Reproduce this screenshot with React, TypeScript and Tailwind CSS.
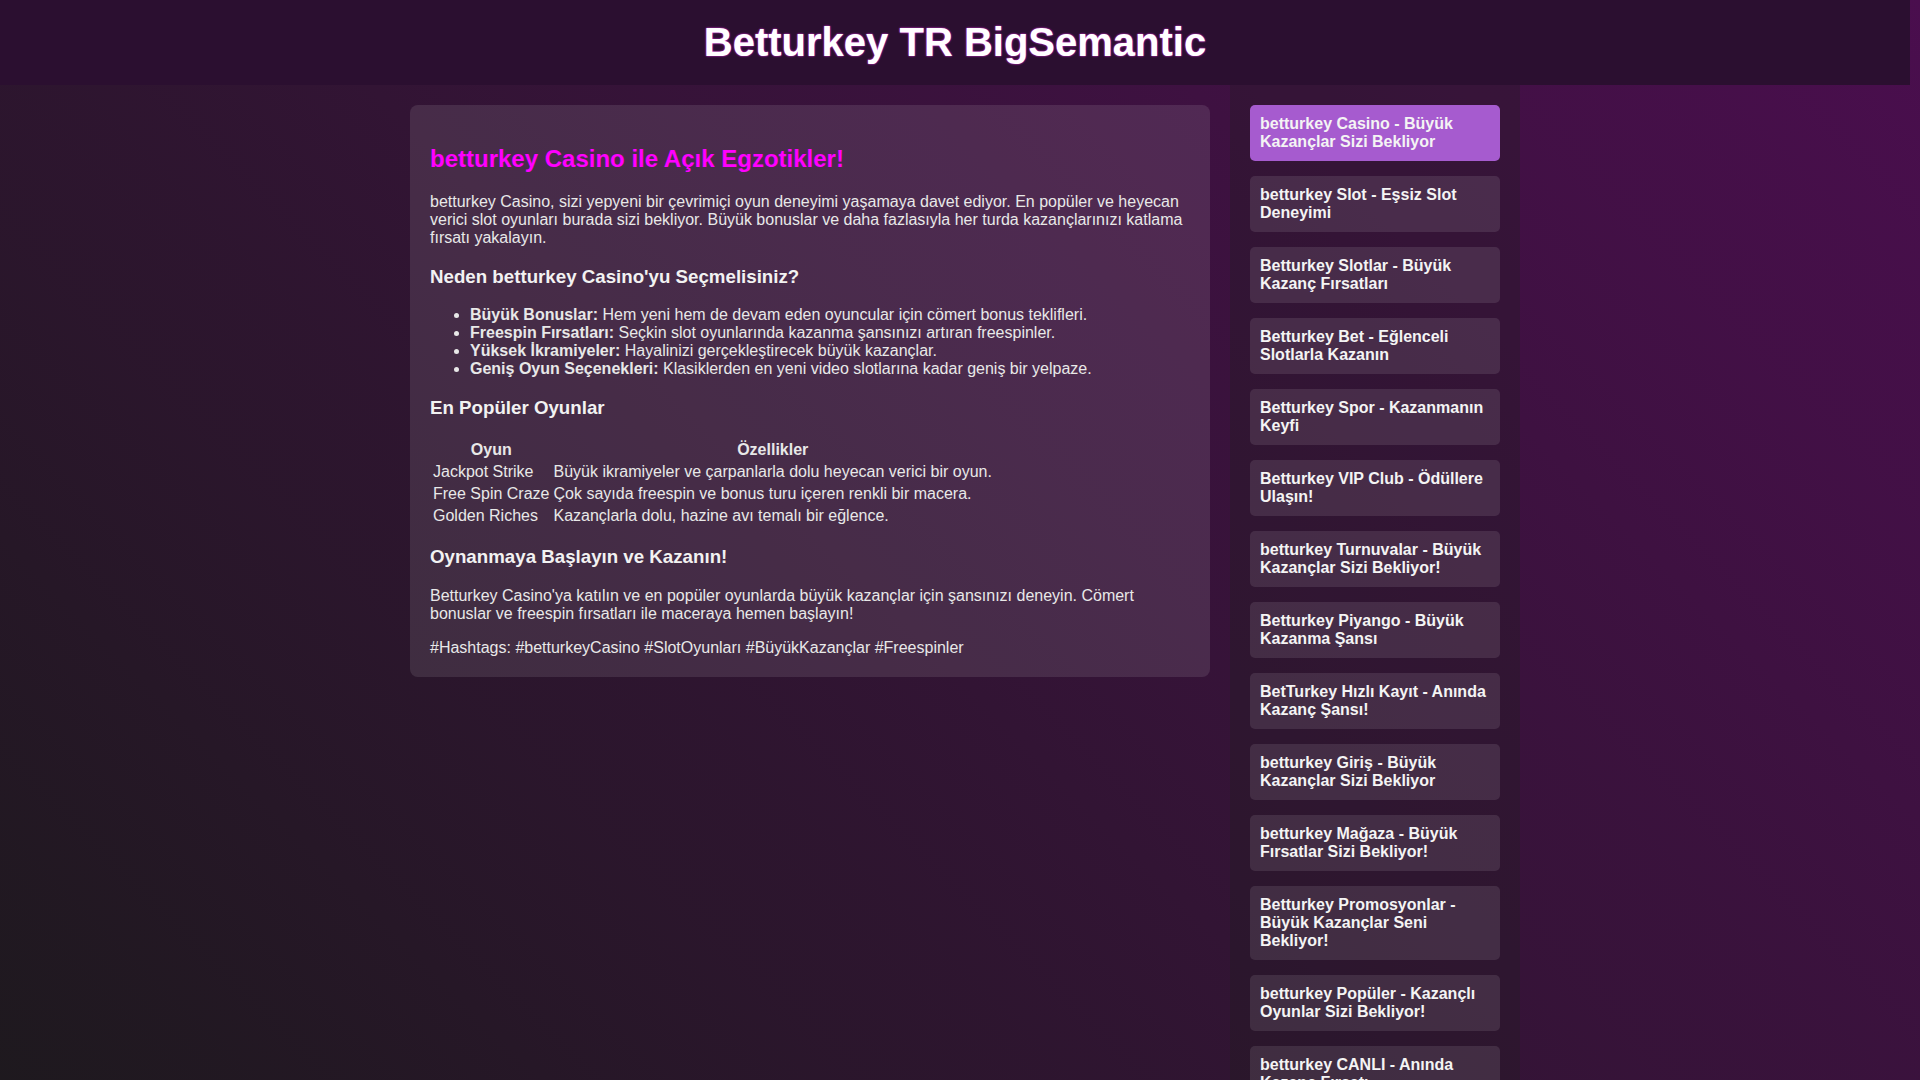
const links = [
  'betturkey Casino - Büyük Kazançlar Sizi Bekliyor',
  'betturkey Slot - Eşsiz Slot Deneyimi',
  'Betturkey Slotlar - Büyük Kazanç Fırsatları',
  'Betturkey Bet - Eğlenceli Slotlarla Kazanın',
  'Betturkey Spor - Kazanmanın Keyfi',
  'Betturkey VIP Club - Ödüllere Ulaşın!',
  'betturkey Turnuvalar - Büyük Kazançlar Sizi Bekliyor!',
  'Betturkey Piyango - Büyük Kazanma Şansı',
  'BetTurkey Hızlı Kayıt - Anında Kazanç Şansı!',
  'betturkey Giriş - Büyük Kazançlar Sizi Bekliyor',
  'betturkey Mağaza - Büyük Fırsatlar Sizi Bekliyor!',
  'Betturkey Promosyonlar - Büyük Kazançlar Seni Bekliyor!',
  'betturkey Popüler - Kazançlı Oyunlar Sizi Bekliyor!',
  'betturkey CANLI - Anında Kazanç Fırsatı',
  'Betturkey Bonus - Hoş Geldin Fırsatları',
  'betturkey Mobil - Her Yerde Kazanç',
  'Betturkey Destek - 7/24 Yanınızda',
]

const games = [
  ['Jackpot Strike', 'Büyük ikramiyeler ve çarpanlarla dolu heyecan verici bir oyun.'],
  ['Free Spin Craze', 'Çok sayıda freespin ve bonus turu içeren renkli bir macera.'],
  ['Golden Riches', 'Kazançlarla dolu, hazine avı temalı bir eğlence.'],
]

const features = [
  ['Büyük Bonuslar:', 'Hem yeni hem de devam eden oyuncular için cömert bonus teklifleri.'],
  ['Freespin Fırsatları:', 'Seçkin slot oyunlarında kazanma şansınızı artıran freespinler.'],
  ['Yüksek İkramiyeler:', 'Hayalinizi gerçekleştirecek büyük kazançlar.'],
  ['Geniş Oyun Seçenekleri:', 'Klasiklerden en yeni video slotlarına kadar geniş bir yelpaze.'],
]

function H3({ children }: { children: React.ReactNode }) {
  return <h3 className="my-[18.72px] text-[18.72px] font-bold text-[#f2f2f2]">{children}</h3>
}

export default function App() {
  return (
    <div className="min-h-screen bg-[linear-gradient(45deg,#1a1a1a,#4a0e4e)] pr-[10px] font-['Liberation_Sans',Arial,sans-serif] text-[16px] leading-[normal] text-[#e8e8e8]">
      <header className="flex h-[85px] w-full items-center justify-center bg-[#2b0f30]">
        <h1 className="text-[40px] font-bold text-white [text-shadow:0_0_2px_#ff33ff]">
          Betturkey TR BigSemantic
        </h1>
      </header>

      <div className="mx-auto flex w-[1130px]">
        <main className="w-[840px] p-5">
          <div className="rounded-lg bg-white/10 px-5 pt-5 pb-1">
            <h2 className="my-[19.92px] text-[24px] font-bold text-[#ff00ff]">
              betturkey Casino ile Açık Egzotikler!
            </h2>
            <p className="my-4">
              betturkey Casino, sizi yepyeni bir çevrimiçi oyun deneyimi yaşamaya davet ediyor. En popüler ve heyecan
              verici slot oyunları burada sizi bekliyor. Büyük bonuslar ve daha fazlasıyla her turda kazançlarınızı katlama
              fırsatı yakalayın.
            </p>

            <H3>Neden betturkey Casino'yu Seçmelisiniz?</H3>
            <ul className="my-4 list-disc pl-10">
              {features.map(([b, t]) => (
                <li key={b}>
                  <strong>{b}</strong> {t}
                </li>
              ))}
            </ul>

            <H3>En Popüler Oyunlar</H3>
            <table className="border-separate border-spacing-[2px]">
              <thead>
                <tr>
                  <th className="p-px text-center font-bold">Oyun</th>
                  <th className="p-px text-center font-bold">Özellikler</th>
                </tr>
              </thead>
              <tbody>
                {games.map(([name, desc]) => (
                  <tr key={name}>
                    <td className="p-px">{name}</td>
                    <td className="p-px">{desc}</td>
                  </tr>
                ))}
              </tbody>
            </table>

            <H3>Oynanmaya Başlayın ve Kazanın!</H3>
            <p className="my-4">
              Betturkey Casino'ya katılın ve en popüler oyunlarda büyük kazançlar için şansınızı deneyin. Cömert
              bonuslar ve freespin fırsatları ile maceraya hemen başlayın!
            </p>
            <p className="my-4">#Hashtags: #betturkeyCasino #SlotOyunları #BüyükKazançlar #Freespinler</p>
          </div>
        </main>

        <aside className="w-[290px] bg-[rgba(30,30,30,0.3)] p-5">
          {links.map((l, i) => (
            <a
              key={l}
              href="#"
              className={
                i === 0
                  ? 'mb-[15px] block rounded-[5px] bg-[#a65bcf] p-[10px] font-bold text-[#f4f4f4]'
                  : 'mb-[15px] block rounded-[5px] bg-white/10 p-[10px] font-bold text-[#f4f4f4]'
              }
            >
              {l}
            </a>
          ))}
        </aside>
      </div>
    </div>
  )
}
